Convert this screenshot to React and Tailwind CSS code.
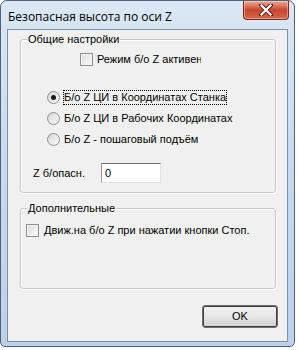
import React from 'react'

const UI_FONT = { fontFamily: '"Liberation Sans", Arial, sans-serif' }

const CheckBox = () => (
  <span className="box-border block w-[13px] h-[13px] border border-[#8e8f8f] bg-gradient-to-br from-[#dcdcdc] to-[#fbfbfb] shadow-[inset_0_0_0_1px_#f4f4f4]" />
)

const Radio = ({ checked }) => (
  <span className="box-border flex items-center justify-center w-[13px] h-[13px] rounded-full border border-[#8e8f8f] bg-gradient-to-br from-[#d6d6d6] to-[#fbfbfb]">
    {checked && <span className="block w-[5px] h-[5px] rounded-full bg-[#1a1a1a]" />}
  </span>
)

const GroupBox = ({ title, className, children }) => (
  <div className={`relative box-border border border-[#c3c8cc] rounded-[3px] shadow-[inset_1px_1px_0_#ffffff,1px_1px_0_#ffffff] ${className}`}>
    <span className="absolute left-[6px] top-[-7px] px-[1px] bg-[#f0f0f0] text-[11px] leading-[13px] text-black">
      {title}
    </span>
    {children}
  </div>
)

const CloseButton = () => (
  <div className="box-border flex items-center justify-center w-[46px] h-[19px] rounded-b-[4px] border border-t-0 border-[#7c2a1c] bg-gradient-to-b from-[#e9a898] via-[#c8452c] to-[#d8674b] shadow-[inset_0_0_0_1px_rgba(255,255,255,0.35)]">
    <svg width="14" height="12" viewBox="0 0 14 12">
      <path d="M2 1 L12 11 M12 1 L2 11" stroke="#5a1a10" strokeWidth="4" strokeLinecap="square" />
      <path d="M2.5 1.5 L11.5 10.5 M11.5 1.5 L2.5 10.5" stroke="#ffffff" strokeWidth="2.2" strokeLinecap="square" />
    </svg>
  </div>
)

export default function App() {
  return (
    <div className="w-[299px] h-[350px] bg-white overflow-hidden" style={UI_FONT}>
      <div className="box-border w-[295px] h-[347px] rounded-t-[7px] rounded-b-[5px] border border-[#4f6077] bg-gradient-to-b from-[#dbe7f5] via-[#c6d9ef] to-[#bcd1ea] flex flex-col">
        <div className="flex h-[28px] shrink-0">
          <span
            className="ml-[7px] mt-[9px] text-[12px] leading-[14px] text-black"
            style={{ fontFamily: '"Open Sans", "Noto Sans", sans-serif' }}
          >
            Безопасная высота по оси Z
          </span>
          <div className="ml-auto mr-[5px]">
            <CloseButton />
          </div>
        </div>

        <div className="box-border ml-[6px] w-[281px] h-[313px] border border-[#7d8fa8] bg-[#f0f0f0] flex flex-col text-[11px] leading-[13px] text-black">
          <GroupBox title="Общие настройки" className="ml-[12px] mt-[9px] w-[256px] h-[154px] flex flex-col">
            <div className="flex items-center h-[13px] mt-[13px] ml-[59px]">
              <CheckBox />
              <span className="ml-[4px] w-[104px] overflow-hidden whitespace-nowrap">Режим б/о Z активен</span>
            </div>

            <div className="flex items-center h-[15px] mt-[24px] ml-[26px]">
              <Radio checked />
              <span className="ml-[3px] px-[1px] h-[15px] flex items-center outline outline-1 outline-dotted outline-black -outline-offset-1">
                Б/о Z ЦИ в Координатах Станка
              </span>
            </div>
            <div className="flex items-center h-[15px] mt-[6px] ml-[26px]">
              <Radio />
              <span className="ml-[4px]">Б/о Z ЦИ в Рабочих Координатах</span>
            </div>
            <div className="flex items-center h-[15px] mt-[6px] ml-[26px]">
              <Radio />
              <span className="ml-[4px]">Б/о Z - пошаговый подъём</span>
            </div>

            <div className="flex items-center h-[20px] mt-[16px] ml-[12px]">
              <span className="w-[68px]">Z б/опасн.</span>
              <div className="box-border w-[60px] h-[20px] border border-t-[#717171] border-l-[#9a9a9a] border-r-[#e2e2e2] border-b-[#e2e2e2] bg-white flex items-center pl-[3px]">
                0
              </div>
            </div>
          </GroupBox>

          <GroupBox title="Дополнительные" className="ml-[12px] mt-[15px] w-[256px] h-[81px]">
            <div className="flex items-center h-[13px] mt-[15px] ml-[5px]">
              <CheckBox />
              <span className="ml-[5px]">Движ.на б/о Z при нажатии кнопки Стоп.</span>
            </div>
          </GroupBox>

          <div className="flex mt-[16px] ml-[194px]">
            <button className="box-border w-[76px] h-[23px] rounded-[3px] border border-[#707070] bg-gradient-to-b from-[#f2f2f2] via-[#e6e6e6] to-[#d0d0d0] shadow-[inset_0_0_0_1px_#fcfcfc] text-[11px] text-black outline outline-1 outline-[#3c3c3c] -outline-offset-[2px]">
              OK
            </button>
          </div>
        </div>
      </div>
    </div>
  )
}
